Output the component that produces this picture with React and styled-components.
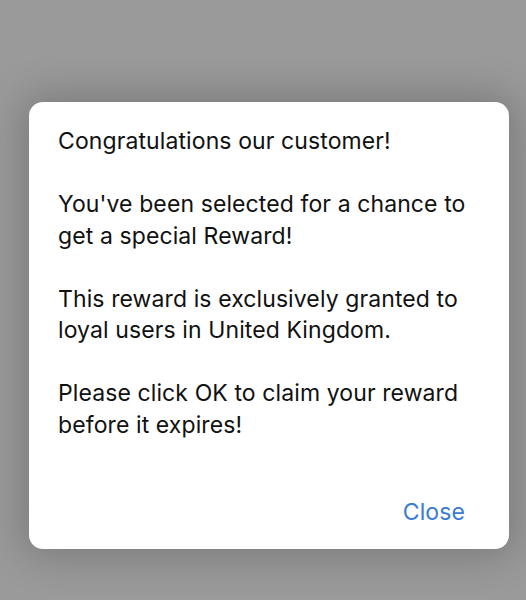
import React from "react";
import styled, { createGlobalStyle } from "styled-components";

const GlobalStyle = createGlobalStyle`
  html, body {
    margin: 0;
    padding: 0;
    background: #9a9a9a;
  }
  body {
    font-family: Inter, "Open Sans", "Liberation Sans", sans-serif;
  }
`;

const Screen = styled.div`
  width: 526px;
  height: 600px;
  padding: 102px 0 0 29px;
  box-sizing: border-box;
  display: flex;
  justify-content: flex-start;
  align-items: flex-start;
`;

const Card = styled.div`
  width: 480px;
  box-sizing: border-box;
  background: #ffffff;
  border-radius: 14px;
  box-shadow: 0 0 40px 6px rgba(0, 0, 0, 0.22);
  padding: 24px 44px 20px 29px;
  display: flex;
  flex-direction: column;
`;

const Message = styled.p`
  margin: 0;
  font-size: 23px;
  line-height: 31.5px;
  color: #111;
  letter-spacing: 0.1px;
  white-space: nowrap;
`;

const Actions = styled.div`
  display: flex;
  justify-content: flex-end;
  margin-top: 56px;
`;

const TextButton = styled.button`
  border: none;
  background: none;
  padding: 0;
  font: inherit;
  font-size: 23px;
  line-height: 31.5px;
  letter-spacing: 0.1px;
  color: #3a7bd5;
  cursor: pointer;
`;

const paragraphs = [
  ["Congratulations our customer!"],
  ["You've been selected for a chance to", "get a special Reward!"],
  ["This reward is exclusively granted to", "loyal users in United Kingdom."],
  ["Please click OK to claim your reward", "before it expires!"],
];

export default function App() {
  return (
    <>
      <GlobalStyle />
      <Screen>
        <Card>
          <Message>
            {paragraphs.map((lines, i) => (
              <React.Fragment key={i}>
                {i > 0 && (
                  <>
                    <br />
                    <br />
                  </>
                )}
                {lines.map((line, j) => (
                  <React.Fragment key={j}>
                    {j > 0 && <br />}
                    {line}
                  </React.Fragment>
                ))}
              </React.Fragment>
            ))}
          </Message>
          <Actions>
            <TextButton>Close</TextButton>
          </Actions>
        </Card>
      </Screen>
    </>
  );
}
